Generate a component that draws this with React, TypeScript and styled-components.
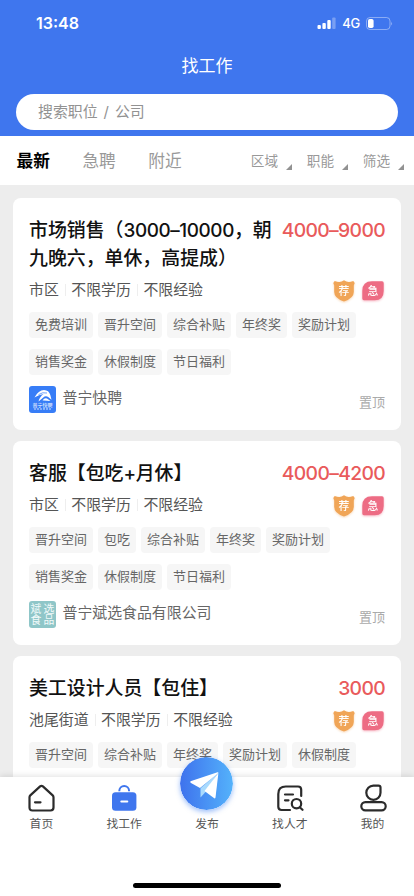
import React from "react";
import styled, { createGlobalStyle } from "styled-components";

const GlobalStyle = createGlobalStyle`
  * { box-sizing: border-box; }
  body {
    margin: 0;
    overflow: hidden;
    background: #ededed;
    font-family: Inter, "Noto Sans CJK SC", sans-serif;
    -webkit-font-smoothing: antialiased;
  }
`;

const Screen = styled.div`
  display: flex;
  flex-direction: column;
  width: 414px;
  height: 896px;
  overflow: hidden;
  background: #ededed;
`;

const Header = styled.header`
  flex: none;
  height: 136px;
  background: #3f76ee;
  color: #fff;
`;

const StatusBar = styled.div`
  display: flex;
  align-items: center;
  height: 46px;
  padding: 0 21px 0 36px;
`;

const Clock = styled.span`
  flex: 1;
  font-size: 16px;
  font-weight: 600;
  line-height: 20px;
`;

const Network = styled.span`
  margin: 0 6px 0 6px;
  font-size: 13px;
  font-weight: 500;
  line-height: 20px;
  letter-spacing: -0.2px;
`;

const PageTitle = styled.h1`
  margin: 0;
  height: 40px;
  line-height: 40px;
  text-align: center;
  font-size: 17px;
  font-weight: 400;
`;

const SearchBox = styled.div`
  margin: 8px 16px 0;
  height: 36px;
  padding-left: 22px;
  border-radius: 18px;
  background: #fff;
  color: #929292;
  font-size: 14.9px;
  line-height: 36px;
  word-spacing: 1.8px;
`;

const FilterBar = styled.div`
  flex: none;
  display: flex;
  justify-content: space-between;
  align-items: center;
  height: 49px;
  padding: 1px 10px 0 16.5px;
  background: #fff;
`;

const Tabs = styled.div`
  display: flex;
  gap: 32.5px;
`;

const Tab = styled.span<{ $active?: boolean }>`
  font-size: 16.7px;
  line-height: 48px;
  font-weight: ${(p) => (p.$active ? 700 : 400)};
  color: ${(p) => (p.$active ? "#000" : "#999")};
`;

const Filters = styled.div`
  display: flex;
  gap: 14.8px;
`;

const Filter = styled.span`
  display: flex;
  align-items: center;
  gap: 8px;
  font-size: 13.6px;
  line-height: 48px;
  color: #999;
  &::after {
    content: "";
    margin-top: 12px;
    border-left: 6px solid transparent;
    border-bottom: 6px solid #929292;
  }
`;

const List = styled.main`
  flex: 1;
  min-height: 0;
  overflow: hidden;
  display: flex;
  flex-direction: column;
  gap: 11px;
  padding: 13px 13px 0;
`;

const Card = styled.article`
  flex: none;
  padding: 19px 16px 17px;
  border-radius: 8px;
  background: #fff;
`;

const CardHead = styled.div`
  display: flex;
  justify-content: space-between;
  align-items: flex-start;
  margin-bottom: 6px;
`;

const JobTitle = styled.h2`
  margin: 0;
  font-size: 18.9px;
  line-height: 28px;
  font-weight: 500;
  color: #111;
  white-space: pre;
`;

const Digits = styled.span`
  letter-spacing: -0.4px;
`;

const Price = styled.span`
  flex: none;
  font-size: 19.3px;
  line-height: 26px;
  font-weight: 500;
  letter-spacing: -0.65px;
  color: #e95a5b;
`;

const MetaRow = styled.div`
  display: flex;
  align-items: center;
  height: 22px;
  margin-bottom: 11px;
`;

const Meta = styled.span`
  font-size: 14.9px;
  line-height: 22px;
  color: #555;
  & + & {
    margin-left: 6.5px;
    padding-left: 6px;
    background: linear-gradient(#eee, #eee) left center / 1px 12px no-repeat;
  }
`;

const Badges = styled.div`
  display: flex;
  gap: 5px;
  margin-left: auto;
  padding-top: 1px;
`;

const TagList = styled.div`
  display: flex;
  flex-wrap: wrap;
  gap: 11px 5px;
  margin-bottom: 11px;
`;

const Tag = styled.span`
  height: 26px;
  padding: 0 6px;
  border-radius: 4px;
  background: #f6f6f6;
  color: #666;
  font-size: 13px;
  line-height: 25px;
`;

const CompanyRow = styled.div`
  display: flex;
  align-items: center;
  height: 27px;
`;

const Company = styled.span`
  flex: 1;
  margin-left: 6.5px;
  padding-bottom: 2px;
  font-size: 14.9px;
  line-height: 25px;
  color: #666;
`;

const Pinned = styled.span`
  padding-top: 4px;
  font-size: 13px;
  line-height: 20px;
  color: #aaa;
`;

const FoodLogo = styled.div`
  display: grid;
  grid-template-columns: repeat(2, 11px);
  grid-template-rows: repeat(2, 11px);
  gap: 0 2px;
  justify-content: center;
  align-content: center;
  width: 27px;
  height: 27px;
  border-radius: 3px;
  background: #8fc6c8;
  color: #f2fafa;
  font-size: 10.8px;
  line-height: 11px;
`;

const BrandLogo = styled.div`
  display: flex;
  flex-direction: column;
  align-items: center;
  width: 27px;
  height: 27px;
  padding-top: 3px;
  border-radius: 3px;
  background: #377df7;
  color: #fff;
`;

const BrandName = styled.span`
  font-size: 5px;
  line-height: 6px;
  white-space: nowrap;
`;

const NavBar = styled.nav`
  position: relative;
  flex: none;
  display: flex;
  flex-wrap: wrap;
  align-content: flex-start;
  height: 119px;
  background: #fff;
  box-shadow: 0 -1px 6px rgba(0, 0, 0, 0.12);
`;

const NavItem = styled.div`
  display: flex;
  flex-direction: column;
  align-items: center;
  justify-content: flex-end;
  width: 20%;
  height: 56px;
`;

const NavLabel = styled.span`
  margin-top: 3px;
  font-size: 11.8px;
  line-height: 18px;
  color: #555;
`;

const PublishIcon = styled.svg`
  display: block;
  flex: none;
  border-radius: 50%;
  box-shadow: 0 2px 5px rgba(64, 130, 245, 0.5);
  margin-bottom: 2px;
`;

const HomeIndicator = styled.div`
  width: 148px;
  height: 5px;
  margin: 50px auto 0;
  border-radius: 3px;
  background: #000;
`;

const SignalIcon = () => (
  <svg width="19" height="12" viewBox="0 0 19 12" fill="#fff">
    <rect x="0.5" y="8" width="3.4" height="4" rx="1" />
    <rect x="5.4" y="6" width="3.4" height="6" rx="1" />
    <rect x="10.3" y="3" width="3.4" height="9" rx="1" />
    <rect x="15.2" y="0.5" width="3.4" height="11.5" rx="1" opacity="0.3" />
  </svg>
);

const BatteryIcon = () => (
  <svg width="27" height="13" viewBox="0 0 27 13" fill="none">
    <rect x="0.5" y="0.5" width="23.5" height="12" rx="3.5" stroke="#fff" strokeOpacity="0.4" />
    <rect x="2" y="2" width="5.6" height="9" rx="1.8" fill="#fff" />
    <path d="M25.2 4.5q1.6 2 0 4z" fill="#fff" fillOpacity="0.45" />
  </svg>
);

const BadgeSvg = styled.svg<{ $tint: string }>`
  display: block;
  overflow: visible;
  filter: drop-shadow(0 1px 1px ${(p) => p.$tint});
  text {
    font-size: 10.8px;
    font-weight: 500;
    fill: #fff;
    text-anchor: middle;
  }
`;

const RecommendBadge = () => (
  <BadgeSvg $tint="rgba(240,160,80,.4)" width="24" height="22" viewBox="0 0 24 22">
    <path
      d="M12 .3Q14.2 2 16.8 2q2 0 4.5-1.1L22.7 3l-.9 2.5V12q0 6.2-9.8 9.5Q2.2 18.2 2.2 12V5.5L1.3 3 2.7.9Q5.2 2 7.2 2 9.8 2 12 .3z"
      fill="#f0a557"
    />
    <text x="12" y="14.7">荐</text>
  </BadgeSvg>
);

const UrgentBadge = () => (
  <BadgeSvg $tint="rgba(238,108,132,.45)" width="24" height="22" viewBox="0 0 24 22">
    <path
      d="M11 1.3h10q1.7 0 1.7 1.7v8q0 9.3-9 9.3H3q-1.7 0-1.7-1.7V11q0-9.7 9.7-9.7z"
      fill="#ed6c84"
    />
    <text x="12" y="14.9">急</text>
  </BadgeSvg>
);

const BrandMark = () => (
  <BrandLogo>
    <svg width="20" height="13" viewBox="0 0 20 13" fill="#fff">
      <path d="M1.5 8.500Q5.500 1 11 1q5 .2 6.300 5l1.200 4.800-3-2.600Q13.500 6.500 11.500 7.500L5.500 12.500Q6.500 8 10.500 5 6 5.800 1.500 8.500z" />
      <path d="M9.500 11.500Q11.500 8.500 14 9.500l3.500 2.500q-4-.6-8-.5z" />
      <path d="M5.500 5.600Q9.500 2.800 14 4" stroke="#377df7" strokeWidth=".7" fill="none" />
    </svg>
    <BrandName>普宁快聘</BrandName>
    <svg width="18" height="2" viewBox="0 0 18 2">
      <path d="M0 1h18" stroke="#fff" strokeWidth="1" strokeDasharray="2 1" opacity=".75" />
    </svg>
  </BrandLogo>
);

const FoodMark = () => (
  <FoodLogo>
    {["斌", "选", "食", "品"].map((c) => (
      <span key={c}>{c}</span>
    ))}
  </FoodLogo>
);

const HomeIcon = () => (
  <svg width="28" height="28" viewBox="-0.5 0 28 28" fill="none" stroke="#2b2b2b" strokeWidth="2.2" strokeLinecap="round" strokeLinejoin="round">
    <path d="M12.6 2.4q1.4-1.2 2.8 0l9.8 9q.8.8.8 1.8v10.4q0 2.9-2.9 2.9H4.9Q2 26.5 2 23.6V13.2q0-1 .8-1.8z" />
    <path d="M7.5 18.3h5.5" />
  </svg>
);

const BagIcon = () => (
  <svg width="28" height="28" viewBox="0 0 28 28" fill="none">
    <path d="M9.300 7.200V7a4.900 4.900 0 0 1 9.800 0v.2" stroke="#3f76ee" strokeWidth="2" />
    <rect x="2" y="8.3" width="24.4" height="18.4" rx="3.5" fill="#3f76ee" />
    <path d="M11.300 17.400h6" stroke="#fff" strokeWidth="2" strokeLinecap="round" />
  </svg>
);

const TalentIcon = () => (
  <svg width="28" height="28" viewBox="0 0 28 28" fill="none" stroke="#2b2b2b" strokeWidth="2.2" strokeLinecap="round" strokeLinejoin="round">
    <path d="M14 26H5.5Q2.3 26 2.3 22.800V10Q2.300 2.500 9.800 2.500h12.200q3.200 0 3.200 3.200V12" />
    <path d="M9 10.500h8M9 16.300h3.500" />
    <circle cx="20.5" cy="19.7" r="4.7" />
    <path d="m23.700 23.200 2.800 2.600" />
  </svg>
);

const ProfileIcon = () => (
  <svg width="28" height="28" viewBox="-0.7 0 28 28" fill="none" stroke="#2b2b2b" strokeWidth="2.2" strokeLinejoin="round">
    <path d="M13.600 1.600h5.200q2 0 2 2v5.100a7.100 7.100 0 1 1-7.200-7.100z" />
    <rect x="1.6" y="18.2" width="24.4" height="8.2" rx="4.1" />
  </svg>
);

const PlaneButton = () => (
  <PublishIcon width="53" height="53" viewBox="0 0 53 53">
    <defs>
      <linearGradient id="publishFill" x1="0" y1="0.5" x2="1" y2="0.5">
        <stop offset="0" stopColor="#3e72ed" />
        <stop offset="1" stopColor="#54b2fb" />
      </linearGradient>
    </defs>
    <circle cx="26.5" cy="26.5" r="26.5" fill="url(#publishFill)" />
    <path d="M38 16 20.500 31.200v9.300l5-5.500z" fill="#a9dafd" />
    <path d="M10.500 24.300 37.500 15.300q1-.2.9.8L20 31 11 26q-1.200-.8-.5-1.700z" fill="#fff" />
    <path d="M38.400 16 24.500 34l9.400 7.100q1.200.8 1.600-.6z" fill="#fff" />
  </PublishIcon>
);

interface Job {
  title: string;
  price: string;
  place: string;
  tags: string[];
  company?: string;
  logo?: React.ReactNode;
}

const jobs: Job[] = [
  {
    title: "市场销售（3000–10000，朝\n九晚六，单休，高提成）",
    price: "4000–9000",
    place: "市区",
    tags: ["免费培训", "晋升空间", "综合补贴", "年终奖", "奖励计划", "销售奖金", "休假制度", "节日福利"],
    company: "普宁快聘",
    logo: <BrandMark />,
  },
  {
    title: "客服【包吃+月休】",
    price: "4000–4200",
    place: "市区",
    tags: ["晋升空间", "包吃", "综合补贴", "年终奖", "奖励计划", "销售奖金", "休假制度", "节日福利"],
    company: "普宁斌选食品有限公司",
    logo: <FoodMark />,
  },
  {
    title: "美工设计人员【包住】",
    price: "3000",
    place: "池尾街道",
    tags: ["晋升空间", "综合补贴", "年终奖", "奖励计划", "休假制度"],
  },
];

const JobCard = ({ job }: { job: Job }) => (
  <Card>
    <CardHead>
      <JobTitle>
        {job.title.split(/([\d–+]+)/).map((part, i) =>
          i % 2 ? <Digits key={i}>{part}</Digits> : part
        )}
      </JobTitle>
      <Price>{job.price}</Price>
    </CardHead>
    <MetaRow>
      <Meta>{job.place}</Meta>
      <Meta>不限学历</Meta>
      <Meta>不限经验</Meta>
      <Badges>
        <RecommendBadge />
        <UrgentBadge />
      </Badges>
    </MetaRow>
    <TagList>
      {job.tags.map((tag) => (
        <Tag key={tag}>{tag}</Tag>
      ))}
    </TagList>
    {job.company && (
      <CompanyRow>
        {job.logo}
        <Company>{job.company}</Company>
        <Pinned>置顶</Pinned>
      </CompanyRow>
    )}
  </Card>
);

const navItems = [
  { label: "首页", icon: <HomeIcon /> },
  { label: "找工作", icon: <BagIcon /> },
  { label: "发布", icon: <PlaneButton /> },
  { label: "找人才", icon: <TalentIcon /> },
  { label: "我的", icon: <ProfileIcon /> },
];

export default function App() {
  return (
    <>
      <GlobalStyle />
      <Screen>
        <Header>
          <StatusBar>
            <Clock>13:48</Clock>
            <SignalIcon />
            <Network>4G</Network>
            <BatteryIcon />
          </StatusBar>
          <PageTitle>找工作</PageTitle>
          <SearchBox>搜索职位 / 公司</SearchBox>
        </Header>
        <FilterBar>
          <Tabs>
            <Tab $active>最新</Tab>
            <Tab>急聘</Tab>
            <Tab>附近</Tab>
          </Tabs>
          <Filters>
            <Filter>区域</Filter>
            <Filter>职能</Filter>
            <Filter>筛选</Filter>
          </Filters>
        </FilterBar>
        <List>
          {jobs.map((job) => (
            <JobCard key={job.title} job={job} />
          ))}
        </List>
        <NavBar>
          {navItems.map((item) => (
            <NavItem key={item.label}>
              {item.icon}
              <NavLabel>{item.label}</NavLabel>
            </NavItem>
          ))}
          <HomeIndicator />
        </NavBar>
      </Screen>
    </>
  );
}
